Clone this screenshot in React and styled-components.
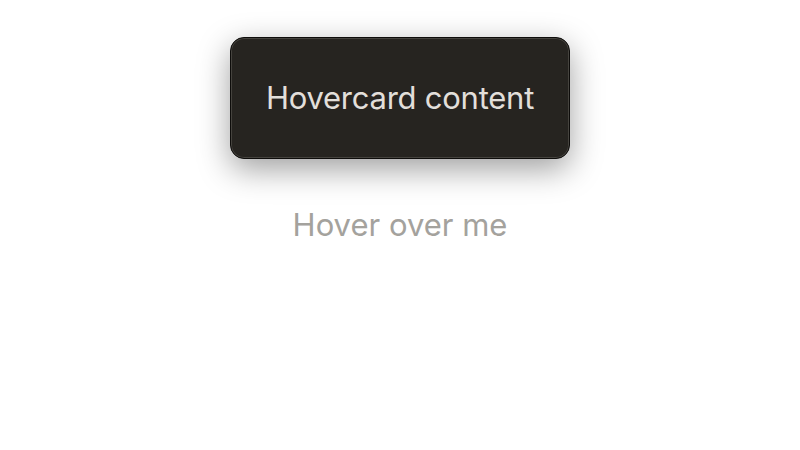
import React from "react";
import styled, { createGlobalStyle } from "styled-components";

const GlobalStyle = createGlobalStyle`
  html, body {
    margin: 0;
    padding: 0;
    background: #ffffff;
  }
  body {
    font-family: Inter, "Noto Sans", sans-serif;
  }
`;

const Page = styled.div`
  width: 800px;
  height: 450px;
  display: flex;
  flex-direction: column;
  align-items: center;
  padding-top: 37px;
  box-sizing: border-box;
`;

const Card = styled.div`
  width: 340px;
  height: 122px;
  box-sizing: border-box;
  display: flex;
  align-items: center;
  justify-content: center;
  background: #262420;
  border: 1px solid #0e0d0b;
  border-radius: 14px;
  box-shadow: inset 0 0 0 1px #45433e, 0 10px 32px rgba(0, 0, 0, 0.38);
  color: #e2dfda;
  font-size: 31px;
  letter-spacing: -0.25px;
  padding-bottom: 2px;
`;

const Trigger = styled.span`
  margin-top: 47px;
  color: #a4a29d;
  font-size: 31px;
  cursor: default;
`;

export default function App() {
  return (
    <>
      <GlobalStyle />
      <Page>
        <Card>Hovercard content</Card>
        <Trigger>Hover over me</Trigger>
      </Page>
    </>
  );
}
